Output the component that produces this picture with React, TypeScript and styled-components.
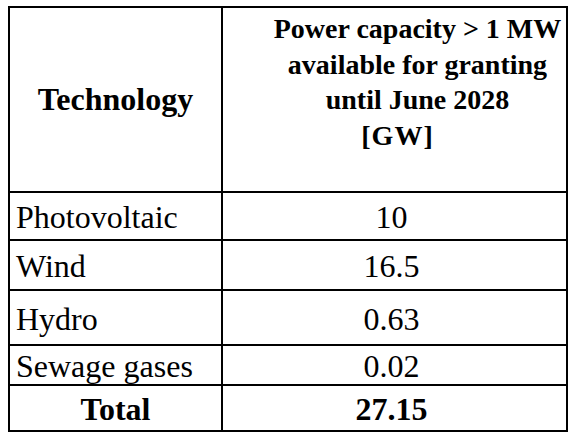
import React from 'react'
import styled, { createGlobalStyle } from 'styled-components';

const GlobalStyle = createGlobalStyle`
  html, body {
    margin: 0;
    padding: 0;
    background: #fff;
  }
  body {
    font-family: "Liberation Serif", "Times New Roman", serif;
    color: #000;
  }
`;

interface Row {
  name: string;
  value: string;
  height: number;
  total?: boolean;
}

const rows: Row[] = [
  { name: "Photovoltaic", value: "10", height: 48 },
  { name: "Wind", value: "16.5", height: 50 },
  { name: "Hydro", value: "0.63", height: 55 },
  { name: "Sewage gases", value: "0.02", height: 40 },
  { name: "Total", value: "27.15", height: 46, total: true },
];

const App: React.FC = () => {
  return (
    <>
      <GlobalStyle />
      <Page>
        <Table>
          <colgroup>
            <col style={{ width: 213 }} />
            <col style={{ width: 345 }} />
          </colgroup>
          <thead>
            <HeadRow>
              <TechHead>Technology</TechHead>
              <CapacityHead>
                <HeadLines>
                  Power capacity &gt; 1 MW<br />
                  available for granting<br />
                  until June 2028
                </HeadLines>
                <UnitLine>[GW]</UnitLine>
              </CapacityHead>
            </HeadRow>
          </thead>
          <tbody>
            {rows.map((r) => (
              <BodyRow key={r.name} $h={r.height}>
                <NameCell $total={r.total}>{r.name}</NameCell>
                <ValueCell $total={r.total}>{r.value}</ValueCell>
              </BodyRow>
            ))}
          </tbody>
        </Table>
      </Page>
    </>
  );
};

export default App

const Page = styled.div`
  width: 576px;
  height: 438px;
  padding: 6px 0 0 8px;
  box-sizing: border-box;
`;

const Table = styled.table`
  width: 558px;
  table-layout: fixed;
  border-collapse: separate;
  border-spacing: 0;
  border-top: 2px solid #000;
  border-left: 2px solid #000;
  font-family: "Liberation Serif", "Times New Roman", serif;
  color: #000;
`;

const Cell = styled.td`
  font-family: "Liberation Serif", "Times New Roman", serif;
  border-right: 2px solid #000;
  border-bottom: 2px solid #000;
  padding: 0;
  box-sizing: border-box;
  white-space: nowrap;
`;

const HeadRow = styled.tr`
  height: 185px;
`;

const TechHead = styled(Cell).attrs({ as: 'th' })`
  font-size: 32px;
  font-weight: 700;
  text-align: center;
  vertical-align: middle;
`;

const CapacityHead = styled(Cell).attrs({ as: 'th' })`
  font-size: 28px;
  font-weight: 700;
  line-height: 35.5px;
  text-align: center;
  vertical-align: top;
  padding-top: 3px;
`;

const HeadLines = styled.div`
  padding-left: 46px;
`;

const UnitLine = styled.div`
  padding-left: 6px;
  letter-spacing: 1px;
`;

const BodyRow = styled.tr<{ $h: number }>`
  height: ${(p) => p.$h}px;
`;

const NameCell = styled(Cell)<{ $total?: boolean }>`
  font-size: 32px;
  line-height: 1;
  font-weight: ${(p) => (p.$total ? 700 : 400)};
  text-align: ${(p) => (p.$total ? 'center' : 'left')};
  padding-left: ${(p) => (p.$total ? 0 : 6)}px;
  padding-top: 2px;
`;

const ValueCell = styled(Cell)<{ $total?: boolean }>`
  font-size: 32px;
  line-height: 1;
  font-weight: ${(p) => (p.$total ? 700 : 400)};
  text-align: center;
  padding-top: 2px;
  padding-right: 6px;
`;
